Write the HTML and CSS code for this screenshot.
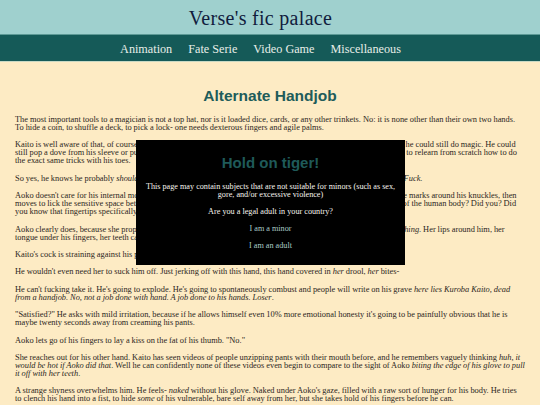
FILE: index.html
```html
<!DOCTYPE html>
<html lang="en">
<head>
    <meta charset="UTF-8">
    <title>Alternate Handjob - Verse's fic palace</title>
    <link rel="stylesheet" href="styles.css">
</head>
<body>
    <div id="header">
        <h1 class="siteName">Verse's fic palace</h1>
    </div>
    <ul id="nav">
        <li><a href="#">Animation</a></li>
        <li><a href="#">Fate Serie</a></li>
        <li><a href="#">Video Game</a></li>
        <li><a href="#">Miscellaneous</a></li>
    </ul>

    <div id="story">
        <h2 class="storyTitle">Alternate Handjob</h2>
        <p>The most important tools to a magician is not a top hat, nor is it loaded dice, cards, or any other trinkets. No: it is none other than their own two hands. To hide a coin, to shuffle a deck, to pick a lock- one needs dexterous fingers and agile palms.</p>
        <p>Kaito is well aware of that, of course. Even on the very worst of days, with both of his arms stuck in a sling, he knew he could still do magic. He could still pop a dove from his sleeve or pull a coin from behind an ear, he'd simply need to be patient, since he would have to relearn from scratch how to do the exact same tricks with his toes.</p>
        <p>So yes, he knows he probably <em>should</em> not be this worked up over a little attention to his hands. But oh my god. Fuck. <em>Fuck</em>.</p>
        <p>Aoko doesn't care for his internal monologue, though. She now kisses each of his fingers in turn and leaves tiny white marks around his knuckles, then moves to lick the sensitive space between each of them. Did you know the hands are among the most sensitive parts of the human body? Did you? Did you know that fingertips specifically has more nerve endings than nearly anywhere else?</p>
        <p>Aoko clearly does, because she properly takes her sweet time with each and every one, as if she wants to learn <em>everything</em>. Her lips around him, her tongue under his fingers, her teeth catching on every knuckle.</p>
        <p>Kaito's cock is straining against his pants.</p>
        <p>He wouldn't even need her to suck him off. Just jerking off with this hand, this hand covered in <em>her</em> drool, <em>her</em> bites-</p>
        <p>He can't fucking take it. He's going to explode. He's going to spontaneously combust and people will write on his grave <em>here lies Kuroba Kaito, dead from a handjob. No, not a job done with hand. A job done to his hands. Loser</em>.</p>
        <p>"Satisfied?" He asks with mild irritation, because if he allows himself even 10% more emotional honesty it's going to be painfully obvious that he is maybe twenty seconds away from creaming his pants.</p>
        <p>Aoko lets go of his fingers to lay a kiss on the fat of his thumb. "No."</p>
        <p>She reaches out for his other hand. Kaito has seen videos of people unzipping pants with their mouth before, and he remembers vaguely thinking <em>huh, it would be hot if Aoko did that</em>. Well he can confidently none of these videos even begin to compare to the sight of Aoko <em>biting the edge of his glove to pull it off with her teeth</em>.</p>
        <p>A strange shyness overwhelms him. He feels- <em>naked</em> without his glove. Naked under Aoko's gaze, filled with a raw sort of hunger for his body. He tries to clench his hand into a fist, to hide <em>some</em> of his vulnerable, bare self away from her, but she takes hold of his fingers before he can.</p>
    </div>

    <!-- avertissement, reste au-dessus du texte -->
    <div id="ageCheck">
        <h3 class="warnTitle">Hold on tiger!</h3>
        <p>This page may contain subjects that are not suitable for minors (such as sex, gore, and/or excessive violence)</p>
        <p>Are you a legal adult in your country?</p>
        <a class="choice" href="#">I am a minor</a>
        <a class="choice" href="#">I am an adult</a>
    </div>
</body>
</html>
```

FILE: styles.css
```css
body{
    margin:0;
    background-color:#fdebc4;
    color:#2b2622;
    font-family:"Liberation Serif",serif;
}
h1,h2,h3,p{margin:0;}

#header{
    padding-right:19px;
    background-color:#9fd0ce;
    border-bottom:1px solid #5d9996;
}
#header .siteName{
    height:34px;
    font-size:20px;
    font-weight:normal;
    line-height:36px;
    letter-spacing:0.3px;
    text-align:center;
    color:#111c3d;
}

#nav{
    display:flex;
    justify-content:center;
    align-items:center;
    gap:16px;
    height:26px;
    margin:0;
    padding:0 19px 0 0;
    list-style:none;
    background-color:#155a58;
    border-bottom:1px solid #c9d9c4;
}
#nav a{
    color:#e8eee8;
    font-size:12.2px;
    text-decoration:none;
}

#story{
    padding:0 15px 20px;
}
#story .storyTitle{
    margin:24px 0 10px;
    font-family:"Liberation Sans",sans-serif;
    font-size:15.5px;
    line-height:20px;
    text-align:center;
    color:#205c5a;
}
#story p{
    margin-bottom:9.4px;
    font-size:8.4px;
    line-height:8px;
    word-spacing:-0.15px;
}

#ageCheck{
    position:fixed;
    top:140px;
    left:136px;
    width:259px;
    padding:13px 5px 15px;
    background-color:#000;
    color:#f7f4ee;
    text-align:center;
    font-size:8.2px;
    line-height:8px;
}
#ageCheck .warnTitle{
    margin-bottom:10px;
    font-family:"Liberation Sans",sans-serif;
    font-size:15px;
    line-height:20px;
    color:#1f5a59;
}
#ageCheck p{
    margin-bottom:9px;
}
#ageCheck .choice{
    display:block;
    margin-top:9px;
    color:#a9cbc7;
    text-decoration:none;
}
```
